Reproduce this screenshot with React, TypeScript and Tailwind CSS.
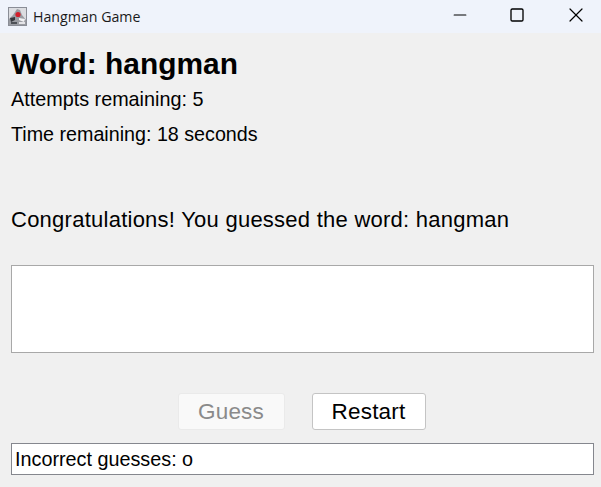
import { Minus, Square, X } from "lucide-react";

function AppIcon() {
  return (
    <svg width="19" height="19" viewBox="0 0 19 19" className="shrink-0">
      <rect x="0.5" y="0.5" width="18" height="18" fill="#dcdde1" stroke="#8a8d96" />
      <path d="M9 2 L12 3 L14 8 L18 13 L18 18 L1 18 L1 12 L5 8 Z" fill="#9a9ca2" />
      <path d="M2 11 L7 10 L7 13 L3 15 Z" fill="#35373c" />
      <path d="M11 11 L17 12 L16 15 L11 13 Z" fill="#f2f2f4" />
      <path d="M3 15 H9 V17 H3 Z" fill="#4d5056" />
      <path d="M11 15 H17 V17 H11 Z" fill="#e4e4e8" />
      <circle cx="10" cy="7.5" r="2.6" fill="#d21f2b" />
    </svg>
  );
}

export default function App() {
  return (
    <div className="flex h-[487px] w-[601px] flex-col overflow-hidden bg-[#f0f0f0] font-['Liberation_Sans',Arial,sans-serif] text-black">
      {/* title bar */}
      <div className="flex h-[33px] shrink-0 items-center bg-[#eff3fb] pl-2">
        <AppIcon />
        <span className="ml-[6px] font-['Open_Sans',sans-serif] text-[14.2px] text-[#1a1a1a]">Hangman Game</span>
        <div className="ml-auto flex items-center gap-[39px] pr-[13px] pb-[3px]">
          <Minus size={20} strokeWidth={1.4} />
          <Square size={16} strokeWidth={2} />
          <X size={24} strokeWidth={1.2} />
        </div>
      </div>

      <div className="flex flex-1 flex-col px-[11px] pr-[7px]">
        <h1 className="mt-[13px] text-[29.9px] leading-[36px] font-bold">Word: hangman</h1>
        <p className="text-[19.8px] leading-[35px]">Attempts remaining: 5</p>
        <p className="text-[19.7px] leading-[35px]">Time remaining: 18 seconds</p>
        <p className="mt-[50px] text-[22px] leading-[35px] tracking-[0.25px]">Congratulations! You guessed the word: hangman</p>

        {/* input */}
        <div className="mt-[28px] h-[88px] border border-[#a8a8a8] bg-white" />

        <div className="mt-[40px] flex justify-center gap-[27px] pr-[2px]">
          <button className="h-[37px] w-[107px] rounded-[3px] border border-[#eaeaea] bg-[#f9f9f9] text-[22.5px] tracking-[0.2px] text-[#8a8a8a]">Guess</button>
          <button className="h-[37px] w-[114px] rounded-[3px] border border-[#c4c4c4] bg-white text-[22.5px] tracking-[0.2px]">Restart</button>
        </div>

        <div className="mt-[13px] flex h-[32px] items-center border border-[#85878e] bg-white pt-[1px] pl-[3px] text-[19.8px]">
          Incorrect guesses: o
        </div>
      </div>
    </div>
  );
}
